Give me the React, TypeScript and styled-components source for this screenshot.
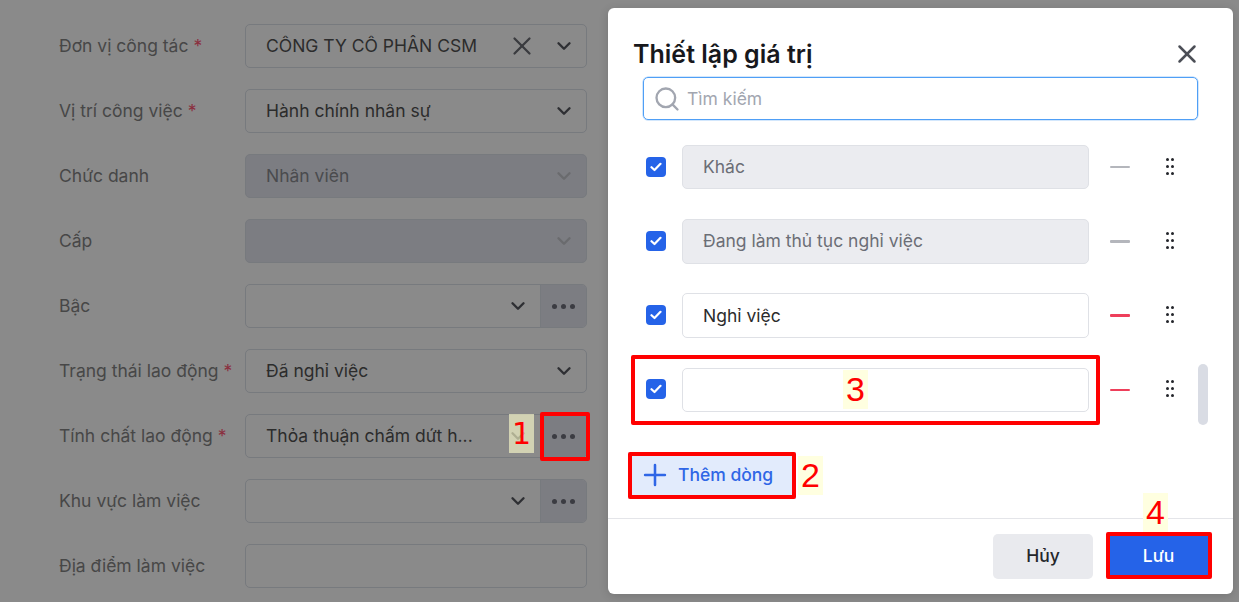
import { ReactNode } from "react";
import styled, { createGlobalStyle } from "styled-components";
import { ChevronDown, Plus, Search, X } from "lucide-react";

const GlobalStyle = createGlobalStyle`
  html, body {
    margin: 0;
    padding: 0;
    height: 100%;
    overflow: hidden;
    background: #8a8a8a;
    font-family: Inter, "Noto Sans", sans-serif;
  }
  * { box-sizing: border-box; }
`;

const Page = styled.div`
  position: relative;
  width: 1239px;
  height: 602px;
  overflow: hidden;
  display: flex;
  gap: 58px;
  padding: 24px 0 0 59px;
`;

const FormColumn = styled.div<{ $width: number }>`
  flex: none;
  width: ${(p) => p.$width}px;
  display: flex;
  flex-direction: column;
  gap: 21px;
`;

const FormRow = styled.div`
  display: flex;
  align-items: center;
  height: 44px;
`;

const Label = styled.div`
  width: 186px;
  flex: none;
  padding-bottom: 2px;
  font-size: 17.5px;
  color: #474747;
  white-space: nowrap;
`;

const Required = styled.span`
  color: #8b2f3f;
`;

const Field = styled.div<{ $disabled?: boolean }>`
  flex: 1;
  min-width: 0;
  height: 44px;
  display: flex;
  align-items: center;
  border: 1px solid #777a7e;
  border-radius: 5px;
  overflow: hidden;
  background: ${(p) => (p.$disabled ? "#7c7d82" : "transparent")};
`;

const FieldValue = styled.div<{ $disabled?: boolean }>`
  flex: 1;
  min-width: 0;
  padding: 0 0 2px 20px;
  font-size: 17.5px;
  white-space: nowrap;
  color: ${(p) => (p.$disabled ? "#4a4b4e" : "#2c2c2c")};
`;

const Caret = styled.div<{ $disabled?: boolean }>`
  flex: none;
  width: 44px;
  display: flex;
  justify-content: center;
  color: ${(p) => (p.$disabled ? "#6a6b6e" : "#2e2f33")};
`;

const ClearIcon = styled.div`
  flex: none;
  display: flex;
  margin-right: 5px;
  color: #3a3b3f;
`;

const MoreButton = styled.div`
  flex: none;
  width: 46px;
  height: 100%;
  display: flex;
  align-items: center;
  justify-content: center;
  gap: 4px;
  background: #7c7d82;
  border-left: 1px solid #777a7e;
`;

const MoreDot = styled.i`
  width: 5px;
  height: 5px;
  border-radius: 50%;
  background: #3b3c42;
`;

const Modal = styled.div`
  position: absolute;
  left: 608px;
  top: 8px;
  width: 625px;
  height: 586px;
  display: flex;
  flex-direction: column;
  background: #fff;
  border-radius: 6px;
  box-shadow: 0 2px 10px rgba(0, 0, 0, 0.15);
`;

const ModalHeader = styled.div`
  height: 69px;
  flex: none;
  display: flex;
  align-items: center;
  justify-content: space-between;
  padding: 23px 31px 0 25px;
`;

const ModalTitle = styled.div`
  font-size: 25px;
  font-weight: 600;
  color: #17181c;
  white-space: nowrap;
`;

const CloseIcon = styled.div`
  display: flex;
  color: #4c4f57;
`;

const SearchBox = styled.div`
  flex: none;
  height: 43px;
  margin: 0 35px;
  display: flex;
  align-items: center;
  gap: 6px;
  padding-left: 9px;
  border: 1px solid #4f9ff6;
  box-shadow: 0 0 0 0.5px rgba(79, 159, 246, 0.5);
  border-radius: 5px;
  font-size: 17.5px;
  color: #a2a6b0;
`;

const RowList = styled.div`
  flex: none;
  height: 332px;
  padding-top: 25px;
  display: flex;
  flex-direction: column;
  gap: 30.3px;
  position: relative;
`;

const ValueRow = styled.div`
  flex: none;
  height: 44px;
  display: flex;
  align-items: center;
  padding-left: 38px;
`;

const Check = styled.div`
  flex: none;
  width: 20px;
  height: 20px;
  margin-top: -1px;
  border-radius: 4px;
  background: #2563e8;
  display: flex;
  align-items: center;
  justify-content: center;
`;

const ValueInput = styled.div<{ $locked?: boolean }>`
  flex: none;
  width: 407px;
  height: 44.5px;
  margin-left: 16px;
  padding: 0 0 ${(p) => (p.$locked ? 2 : 0)}px 20px;
  display: flex;
  align-items: center;
  font-size: 17.5px;
  border: 1px solid #dfe1e6;
  border-radius: 5px;
  background: ${(p) => (p.$locked ? "#ebecf0" : "#fff")};
  color: ${(p) => (p.$locked ? "#6b6e76" : "#2c2c2c")};
  white-space: nowrap;
`;

const Dash = styled.div<{ $active?: boolean }>`
  flex: none;
  width: 20px;
  height: 2.5px;
  margin-left: 21px;
  border-radius: 1px;
  background: ${(p) => (p.$active ? "#ee3f5b" : "#b4b6bc")};
`;

const DragHandle = styled.div`
  flex: none;
  margin: -2px 0 0 36px;
  display: grid;
  grid-template-columns: 3px 3px;
  grid-auto-rows: 3px;
  gap: 4px 2px;
`;

const DragDot = styled.i`
  background: #24262b;
  border-radius: 50%;
`;

const ScrollThumb = styled.div`
  position: absolute;
  left: 590px;
  top: 244px;
  width: 10px;
  height: 61px;
  border-radius: 5px;
  background: #d9dce4;
`;

const AddLine = styled.div`
  flex: none;
  height: 47px;
  width: 168px;
  margin-left: 20px;
  padding: 0 0 2px 10px;
  display: flex;
  align-items: center;
  gap: 6px;
  background: #e2ebfc;
  color: #2f66e6;
  font-size: 17.5px;
  font-weight: 500;
`;

const ModalFooter = styled.div`
  margin-top: 19px;
  flex-grow: 1;
  border-top: 1px solid #e4e5e9;
  display: flex;
  justify-content: flex-end;
  gap: 14px;
  padding: 15px 21px 0 0;
`;

const FooterButton = styled.div<{ $primary?: boolean }>`
  height: 45px;
  width: ${(p) => (p.$primary ? 105 : 100)}px;
  padding: 0 ${(p) => (p.$primary ? 2 : 0)}px 2px 0;
  display: flex;
  align-items: center;
  justify-content: center;
  border-radius: 5px;
  font-size: 17.5px;
  font-weight: 500;
  background: ${(p) => (p.$primary ? "#2563e8" : "#e9eaee")};
  color: ${(p) => (p.$primary ? "#fff" : "#24262b")};
`;

const RedBox = styled.div<{ $x: number; $y: number; $w: number; $h: number }>`
  position: absolute;
  left: ${(p) => p.$x}px;
  top: ${(p) => p.$y}px;
  width: ${(p) => p.$w}px;
  height: ${(p) => p.$h}px;
  border: 4px solid #ff0000;
  border-radius: 2px;
`;

const Marker = styled.div<{ $x: number; $y: number; $dim?: boolean }>`
  position: absolute;
  left: ${(p) => p.$x}px;
  top: ${(p) => p.$y}px;
  width: 25px;
  height: 39px;
  display: flex;
  align-items: center;
  justify-content: center;
  font-family: ${(p) => (p.$dim ? '"DejaVu Sans"' : '"Liberation Sans"')}, sans-serif;
  font-size: ${(p) => (p.$dim ? 30 : 34)}px;
  color: #ff0000;
  background: ${(p) => (p.$dim ? "rgba(255, 255, 205, 0.62)" : "#ffffe0")};
`;

type FormField = {
  label: string;
  required?: boolean;
  value?: string;
  disabled?: boolean;
  clearable?: boolean;
  more?: boolean;
};

const formFields: FormField[] = [
  { label: "Đơn vị công tác", required: true, value: "CÔNG TY CÔ PHÂN CSM", clearable: true },
  { label: "Vị trí công việc", required: true, value: "Hành chính nhân sự" },
  { label: "Chức danh", value: "Nhân viên", disabled: true },
  { label: "Cấp", disabled: true },
  { label: "Bậc", more: true },
  { label: "Trạng thái lao động", required: true, value: "Đã nghỉ việc" },
  { label: "Tính chất lao động", required: true, value: "Thỏa thuận chấm dứt h...", more: true },
  { label: "Khu vực làm việc", more: true },
];

const values = [
  { text: "Khác", locked: true },
  { text: "Đang làm thủ tục nghỉ việc", locked: true },
  { text: "Nghỉ việc" },
  { text: "" },
];

const Row = ({ label, children }: { label: ReactNode; children: ReactNode }) => (
  <FormRow>
    <Label>{label}</Label>
    {children}
  </FormRow>
);

const FormSelect = ({ field }: { field: FormField }) => (
  <Row
    label={
      <>
        {field.label}
        {field.required && <Required> *</Required>}
      </>
    }
  >
    <Field $disabled={field.disabled}>
      <FieldValue $disabled={field.disabled}>{field.value}</FieldValue>
      {field.clearable && (
        <ClearIcon>
          <X size={30} strokeWidth={1.8} />
        </ClearIcon>
      )}
      <Caret $disabled={field.disabled}>
        <ChevronDown size={22} strokeWidth={2.6} />
      </Caret>
      {field.more && (
        <MoreButton>
          <MoreDot />
          <MoreDot />
          <MoreDot />
        </MoreButton>
      )}
    </Field>
  </Row>
);

const CheckMark = () => (
  <svg width="12" height="10" viewBox="0 0 12 10" fill="none">
    <path d="M1.5 5.2 4.5 8 10.5 1.8" stroke="#fff" strokeWidth="2.2" strokeLinecap="round" strokeLinejoin="round" />
  </svg>
);

export default function App() {
  return (
    <Page>
      <GlobalStyle />
      <FormColumn $width={528}>
        {formFields.map((field) => (
          <FormSelect key={field.label} field={field} />
        ))}
        <Row label="Địa điểm làm việc">
          <Field />
        </Row>
      </FormColumn>
      <FormColumn $width={400}>
        {[true, false, false, false, false, true, false, false, false].map((disabled, i) => (
          <FormRow key={i}>
            <Label />
            <Field $disabled={disabled} />
          </FormRow>
        ))}
      </FormColumn>

      <Modal>
        <ModalHeader>
          <ModalTitle>Thiết lập giá trị</ModalTitle>
          <CloseIcon>
            <X size={30} strokeWidth={2} />
          </CloseIcon>
        </ModalHeader>
        <SearchBox>
          <Search size={28} strokeWidth={2} color="#a2a6b0" />
          Tìm kiếm
        </SearchBox>
        <RowList>
          {values.map((item, i) => (
            <ValueRow key={i}>
              <Check>
                <CheckMark />
              </Check>
              <ValueInput $locked={item.locked}>{item.text}</ValueInput>
              <Dash $active={!item.locked} />
              <DragHandle>
                {[0, 1, 2, 3, 4, 5].map((d) => (
                  <DragDot key={d} />
                ))}
              </DragHandle>
            </ValueRow>
          ))}
          <ScrollThumb />
        </RowList>
        <AddLine>
          <Plus size={34} strokeWidth={1.8} />
          Thêm dòng
        </AddLine>
        <ModalFooter>
          <FooterButton>Hủy</FooterButton>
          <FooterButton $primary>Lưu</FooterButton>
        </ModalFooter>
      </Modal>

      <RedBox $x={540} $y={412} $w={50} $h={49} />
      <RedBox $x={631} $y={355} $w={469} $h={70} />
      <RedBox $x={628} $y={452} $w={168} $h={47} />
      <RedBox $x={1106} $y={532} $w={106} $h={47} />
      <Marker $x={509} $y={414} $dim>1</Marker>
      <Marker $x={798} $y={456}>2</Marker>
      <Marker $x={843} $y={370}>3</Marker>
      <Marker $x={1143} $y={493}>4</Marker>
    </Page>
  );
}
